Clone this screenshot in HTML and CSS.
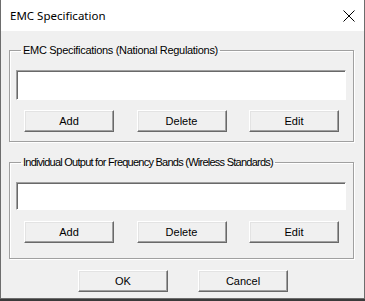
FILE: index.html
```html
<!DOCTYPE html>
<html>
<head>
<meta charset="utf-8">
<link rel="stylesheet" href="styles.css">
</head>
<body>
<div class="window">
  <div class="titlebar">
    <span class="title">EMC Specification</span>
    <svg class="close" width="12" height="12" viewBox="0 0 12 12"><path d="M0.5 0.5 L11.5 11.5 M11.5 0.5 L0.5 11.5" stroke="#000" stroke-width="1" fill="none"/></svg>
  </div>
  <div class="client">
    <fieldset class="group g1">
      <legend>EMC Specifications (National Regulations)</legend>
      <div class="listbox lb1"></div>
      <div class="btnrow">
        <button class="btn">Add</button>
        <button class="btn">Delete</button>
        <button class="btn">Edit</button>
      </div>
    </fieldset>
    <fieldset class="group g2">
      <legend>Individual Output for Frequency Bands (Wireless Standards)</legend>
      <div class="listbox lb2"></div>
      <div class="btnrow br2">
        <button class="btn">Add</button>
        <button class="btn">Delete</button>
        <button class="btn">Edit</button>
      </div>
    </fieldset>
    <div class="footer">
      <button class="btn">OK</button>
      <button class="btn">Cancel</button>
    </div>
  </div>
</div>
</body>
</html>
```
FILE: styles.css
```css
html, body {
  margin: 0;
  padding: 0;
  background: #3a3a3a;
}
.window {
  width: 363px;
  height: 298px;
  border-left: 1px solid #6d6d6d;
  border-right: 1px solid #6d6d6d;
  border-bottom: 1px solid #6d6d6d;
  background: #f0f0f0;
  display: flex;
  flex-direction: column;
  font-family: "Liberation Sans", Arial, sans-serif;
  font-size: 11px;
  color: #000;
}
.titlebar {
  height: 31px;
  background: #fff;
  display: flex;
  align-items: center;
  justify-content: space-between;
  padding: 0 9px 0 9px;
}
.title {
  font-family: "Noto Sans", "Open Sans", sans-serif;
  font-size: 11.5px;
  color: #000;
}
.client {
  flex: 1;
  display: flex;
  flex-direction: column;
  padding: 13px 10px 0 8px;
}
.group {
  margin: 0;
  padding: 0 7px 0 6px;
  border: 1px solid #a0a0a0;
  box-shadow: 1px 1px 0 #fff, inset 1px 1px 0 #fff;
  min-width: 0;
}
.group legend {
  margin-left: 5px;
  padding: 0 2px;
  line-height: 13px;
  font-size: 11px;
  letter-spacing: -0.3px;
}
.g2 legend {
  letter-spacing: -0.75px;
}
.g1 { height: 96px; }
.g2 { height: 101px; margin-top: 14px; }
.listbox {
  background: #fff;
  border-top: 1px solid #a0a0a0;
  border-left: 1px solid #a0a0a0;
  border-right: 1px solid #fff;
  border-bottom: 1px solid #fff;
  box-shadow: inset 1px 1px 0 #696969;
  margin-top: 13px;
}
.lb1 { height: 28px; }
.lb2 { height: 26px; }
.btnrow {
  display: flex;
  justify-content: space-between;
  padding: 0 7px 0 8px;
  margin-top: 10px;
}
.br2 { margin-top: 11px; }
.btn {
  width: 90px;
  height: 22px;
  padding: 0;
  background: #f0f0f0;
  font-family: "Liberation Sans", Arial, sans-serif;
  font-size: 11px;
  color: #000;
  border-top: 1px solid #fff;
  border-left: 1px solid #fff;
  border-right: 1px solid #696969;
  border-bottom: 1px solid #696969;
  box-shadow: inset -1px -1px 0 #a0a0a0, inset 1px 1px 0 #e3e3e3;
  border-radius: 0;
}
.footer {
  display: flex;
  justify-content: center;
  gap: 30px;
  margin-top: 11px;
  padding-left: 3px;
}
```
